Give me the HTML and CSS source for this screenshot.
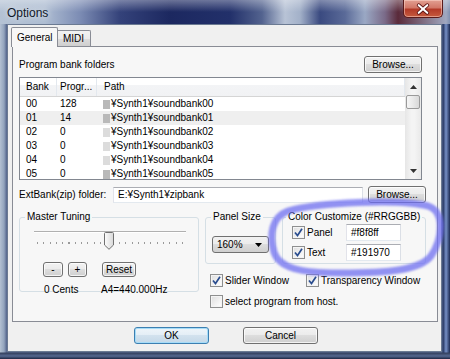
FILE: index.html
```html
<!DOCTYPE html>
<html lang="en">
<head>
    <meta charset="UTF-8">
    <meta name="viewport" content="width=device-width, initial-scale=1.0">
    <title>Options</title>
    <link rel="stylesheet" href="styles.css">
</head>
<body>
    <div class="window">
        <div class="titlebar">
            <span class="title">Options</span>
            <div class="close-btn">
                <svg viewBox="0 0 40 18" width="40" height="18">
                    <path d="M15.5 5 L24.5 13 M24.5 5 L15.5 13" stroke="#5a1010" stroke-width="4" stroke-linecap="round"/>
                    <path d="M15.5 5 L24.5 13 M24.5 5 L15.5 13" stroke="#ffffff" stroke-width="2.2" stroke-linecap="round"/>
                </svg>
            </div>
        </div>

        <div class="frame">
            <div class="client">
                <div class="tabs">
                    <div class="tab active">General</div>
                    <div class="tab">MIDI</div>
                </div>

                <div class="tab-panel">
                    <div class="bank-head">
                        <span>Program bank folders</span>
                        <button class="btn browse">Browse...</button>
                    </div>

                    <div class="listview">
                        <div class="list-body">
                            <div class="list-header">
                                <div class="col-bank">Bank</div>
                                <div class="col-prog">Progr...</div>
                                <div class="col-path">Path</div>
                            </div>
                            <div class="list-row">
                                <div class="col-bank">00</div>
                                <div class="col-prog">128</div>
                                <div class="col-path"><span class="path-icon"></span>¥Synth1¥soundbank00</div>
                            </div>
                            <div class="list-row hot">
                                <div class="col-bank">01</div>
                                <div class="col-prog">14</div>
                                <div class="col-path"><span class="path-icon"></span>¥Synth1¥soundbank01</div>
                            </div>
                            <div class="list-row">
                                <div class="col-bank">02</div>
                                <div class="col-prog">0</div>
                                <div class="col-path"><span class="path-icon light"></span>¥Synth1¥soundbank02</div>
                            </div>
                            <div class="list-row">
                                <div class="col-bank">03</div>
                                <div class="col-prog">0</div>
                                <div class="col-path"><span class="path-icon light"></span>¥Synth1¥soundbank03</div>
                            </div>
                            <div class="list-row">
                                <div class="col-bank">04</div>
                                <div class="col-prog">0</div>
                                <div class="col-path"><span class="path-icon light"></span>¥Synth1¥soundbank04</div>
                            </div>
                            <div class="list-row">
                                <div class="col-bank">05</div>
                                <div class="col-prog">0</div>
                                <div class="col-path"><span class="path-icon"></span>¥Synth1¥soundbank05</div>
                            </div>
                        </div>
                        <div class="scrollbar">
                            <div class="sb-arrow">
                                <svg viewBox="0 0 7 4" width="7" height="4"><path d="M0 4 L3.5 0 L7 4 Z" fill="#333"/></svg>
                            </div>
                            <div class="sb-thumb"></div>
                            <div class="sb-track"></div>
                            <div class="sb-arrow">
                                <svg viewBox="0 0 7 4" width="7" height="4"><path d="M0 0 L3.5 4 L7 0 Z" fill="#333"/></svg>
                            </div>
                        </div>
                    </div>

                    <div class="ext-row">
                        <span>ExtBank(zip) folder:</span>
                        <div class="field">E:¥Synth1¥zipbank</div>
                        <button class="btn browse">Browse...</button>
                    </div>

                    <div class="lower">
                        <fieldset class="group tuning">
                            <legend>Master Tuning</legend>
                            <div class="slider">
                                <div class="slider-track"></div>
                                <div class="slider-ticks"></div>
                                <div class="slider-thumb" style="left: 70px;">
                                    <svg viewBox="0 0 10 18" width="10" height="18">
                                        <defs>
                                            <linearGradient id="thumbFill" x1="0" y1="0" x2="1" y2="0">
                                                <stop offset="0" stop-color="#fdfdfd"/>
                                                <stop offset="1" stop-color="#d8d8d8"/>
                                            </linearGradient>
                                        </defs>
                                        <path d="M1.5 0.5 H8.5 Q9.5 0.5 9.5 1.5 V13 L5 17.3 L0.5 13 V1.5 Q0.5 0.5 1.5 0.5 Z" fill="url(#thumbFill)" stroke="#707070"/>
                                    </svg>
                                </div>
                            </div>
                            <div class="tune-buttons">
                                <button class="btn small minus">-</button>
                                <button class="btn small plus">+</button>
                                <button class="btn small reset">Reset</button>
                            </div>
                            <div class="tune-values">
                                <span>0 Cents</span>
                                <span>A4=440.000Hz</span>
                            </div>
                        </fieldset>

                        <div class="right-col">
                            <div class="group-row">
                                <fieldset class="group size">
                                    <legend>Panel Size</legend>
                                    <div class="combo">
                                        <span>160%</span>
                                        <svg viewBox="0 0 7 4" width="7" height="4"><path d="M0 0 L3.5 4 L7 0 Z" fill="#000"/></svg>
                                    </div>
                                </fieldset>
                                <fieldset class="group colors">
                                    <legend>Color Customize (#RRGGBB)</legend>
                                    <div class="color-row">
                                        <span class="check checked">
                                            <svg viewBox="0 0 11 11" width="11" height="11"><path d="M2 5.5 L4.5 8.5 L9 1.8" fill="none" stroke="#2a4d8f" stroke-width="1.7"/></svg>
                                        </span>
                                        <span class="color-label">Panel</span>
                                        <div class="field">#f8f8ff</div>
                                    </div>
                                    <div class="color-row">
                                        <span class="check checked">
                                            <svg viewBox="0 0 11 11" width="11" height="11"><path d="M2 5.5 L4.5 8.5 L9 1.8" fill="none" stroke="#2a4d8f" stroke-width="1.7"/></svg>
                                        </span>
                                        <span class="color-label">Text</span>
                                        <div class="field">#191970</div>
                                    </div>
                                </fieldset>
                            </div>

                            <div class="check-row first">
                                <label class="check-item slider-opt">
                                    <span class="check checked">
                                        <svg viewBox="0 0 11 11" width="11" height="11"><path d="M2 5.5 L4.5 8.5 L9 1.8" fill="none" stroke="#2a4d8f" stroke-width="1.7"/></svg>
                                    </span>
                                    Slider Window
                                </label>
                                <label class="check-item">
                                    <span class="check checked">
                                        <svg viewBox="0 0 11 11" width="11" height="11"><path d="M2 5.5 L4.5 8.5 L9 1.8" fill="none" stroke="#2a4d8f" stroke-width="1.7"/></svg>
                                    </span>
                                    Transparency Window
                                </label>
                            </div>
                            <div class="check-row">
                                <label class="check-item">
                                    <span class="check"></span>
                                    select program from host.
                                </label>
                            </div>
                        </div>
                    </div>
                </div>

                <div class="dialog-buttons">
                    <button class="btn wide default">OK</button>
                    <button class="btn wide">Cancel</button>
                </div>
            </div>
        </div>

        <!-- hand-drawn marker around the colour settings -->
        <svg class="annotation" viewBox="0 0 450 359" width="450" height="359">
            <defs>
                <filter id="soft" x="-10%" y="-10%" width="120%" height="120%">
                    <feGaussianBlur stdDeviation="1.2"/>
                </filter>
            </defs>
            <path d="M288 211 C 320 202, 400 199, 428 206 C 446 212, 442 240, 431 256 C 420 270, 390 273, 340 273 C 300 273, 279 268, 274 252 C 269 234, 272 217, 288 211 Z"
                  fill="none" stroke="#6f6ff0" stroke-width="7" stroke-opacity="0.75" filter="url(#soft)"/>
        </svg>
    </div>
</body>
</html>
```

FILE: styles.css
```css
* {
    box-sizing: border-box;
}

body {
    margin: 0;
    font-family: 'Liberation Sans', Arial, sans-serif;
    font-size: 10px;
    color: #000;
    background: #5d6f96;
}

.window {
    position: relative;
    width: 450px;
    height: 359px;
    display: flex;
    flex-direction: column;
    background:
        linear-gradient(180deg, transparent 0, transparent 352px, #34405e 353px, #56688f 356px, #1e2744 359px),
        linear-gradient(90deg, #b3c0d2 0, #93a4bd 4px, #52628a 7px, transparent 7px, transparent 442px, #24345f 443px, #7690c6 446px, #1c2a52 450px);
}

/* title bar */
.titlebar {
    height: 24px;
    display: flex;
    align-items: flex-start;
    justify-content: space-between;
    padding: 0 7px 0 7px;
    background:
        linear-gradient(180deg, rgba(255, 255, 255, 0.35) 0, rgba(255, 255, 255, 0) 12px),
        linear-gradient(90deg, #b4c2d4 0, #aebdd2 45px, #7c8cb4 80px, #34427a 120px, #1c2860 170px, #22306a 230px, #53638f 262px, #b8c3d6 285px, #a3b1c9 300px, #3a4a80 320px, #5a6a98 345px, #9aa8c4 365px, #7a6a88 385px, #5a2a3a 398px, #a0a8c0 446px, #8090b0 450px);
}

.title {
    font-size: 12px;
    line-height: 26px;
    color: #101828;
    text-shadow: 0 0 6px rgba(255, 255, 255, 0.9);
}

.close-btn {
    width: 40px;
    height: 18px;
    border: 1px solid #5a1a1a;
    border-top: none;
    border-radius: 0 0 5px 5px;
    background: linear-gradient(180deg, #e2a092 0, #d27868 45%, #b33a28 55%, #c65a3e 100%);
    box-shadow: inset 0 0 0 1px rgba(255, 220, 210, 0.5);
    display: flex;
    align-items: center;
    justify-content: center;
}

.close-btn svg {
    display: block;
}

.frame {
    flex: 1;
    padding: 0 8px 7px 7px;
    display: flex;
}

.client {
    flex: 1;
    background: #f0f0f0;
    border: 1px solid #6b7a92;
    display: flex;
    flex-direction: column;
}

/* tabs */
.tabs {
    display: flex;
    align-items: flex-end;
    height: 19px;
    margin: 2px 0 0 3px;
    position: relative;
    z-index: 1;
}

.tab {
    height: 16px;
    padding: 0 6px 0 5px;
    line-height: 15px;
    border: 1px solid #898c95;
    border-bottom: none;
    border-left: none;
    border-radius: 0 2px 0 0;
    background: linear-gradient(180deg, #f2f2f2 0, #ebebeb 50%, #dddddd 51%, #cfcfcf 100%);
}

.tab.active {
    height: 20px;
    width: 47px;
    margin-bottom: -1px;
    padding: 0 0 0 5px;
    line-height: 19px;
    border-left: 1px solid #898c95;
    border-radius: 2px 2px 0 0;
    background: #f7f7f7;
}

.tab-panel {
    margin-left: 4px;
    width: 426px;
    height: 276px;
    border: 1px solid #898c95;
    background: #f7f7f7;
    padding: 9px 15px 0 6px;
    display: flex;
    flex-direction: column;
}

/* buttons */
.btn {
    font: inherit;
    color: #000;
    height: 17px;
    padding: 0;
    border: 1px solid #707070;
    border-radius: 3px;
    background: linear-gradient(180deg, #f2f2f2 0, #ebebeb 49%, #dddddd 50%, #cfcfcf 100%);
    box-shadow: inset 0 0 0 1px rgba(255, 255, 255, 0.75);
}

.btn.browse {
    width: 58px;
}

.btn.small {
    height: 15px;
    line-height: 12px;
}

.btn.minus {
    width: 20px;
}

.btn.plus {
    width: 19px;
}

.btn.reset {
    width: 34px;
}

.btn.wide {
    width: 75px;
}

.btn.default {
    border-color: #3c7fb1;
    background: linear-gradient(180deg, #eef5fa 0, #e3eef6 49%, #d2e2ee 50%, #c4d8e8 100%);
    box-shadow: inset 0 0 0 1px #a6dcf8;
}

/* bank list */
.bank-head {
    height: 17px;
    display: flex;
    align-items: center;
    justify-content: space-between;
}

.listview {
    margin-top: 4px;
    height: 103px;
    border: 1px solid #828790;
    background: #fff;
    display: flex;
}

.list-body {
    flex: 1;
    overflow: hidden;
}

.list-header,
.list-row {
    display: grid;
    grid-template-columns: 37px 40px 1fr;
}

.list-header {
    height: 19px;
    line-height: 18px;
    border-bottom: 1px solid #d5d5d5;
    background: linear-gradient(180deg, #ffffff 0, #ffffff 40%, #f3f4f6 41%, #f1f2f4 100%);
}

.list-header > div {
    border-right: 1px solid #e3e8ee;
}

.list-row {
    height: 14px;
    line-height: 14px;
}

.list-row.hot {
    background: #efefef;
}

.col-bank {
    padding-left: 6px;
}

.col-prog {
    padding-left: 3px;
}

.col-path {
    padding-left: 6px;
    display: flex;
    align-items: center;
    white-space: nowrap;
}

.list-header .col-path {
    padding-left: 7px;
}

.path-icon {
    width: 7px;
    height: 9px;
    margin-right: 1px;
    background: #b9b9b9;
}

.path-icon.light {
    background: #dcdcdc;
}

.scrollbar {
    width: 16px;
    display: flex;
    flex-direction: column;
    background: linear-gradient(90deg, #e6e6e6 0, #f4f4f4 40%, #f4f4f4 60%, #e9e9e9 100%);
}

.sb-arrow {
    height: 17px;
    display: flex;
    align-items: center;
    justify-content: center;
}

.sb-thumb {
    height: 14px;
    margin: 0 1px;
    border: 1px solid #9a9a9a;
    border-radius: 2px;
    background: linear-gradient(90deg, #f6f6f6 0, #e9e9e9 50%, #d8d8d8 100%);
}

.sb-track {
    flex: 1;
}

/* ext bank row */
.ext-row {
    margin-top: 6px;
    height: 17px;
    display: grid;
    grid-template-columns: 89px 250px 58px;
    column-gap: 5px;
    align-items: center;
    white-space: nowrap;
}

.field {
    height: 17px;
    padding: 0 4px;
    display: flex;
    align-items: center;
    background: #fff;
    border: 1px solid;
    border-color: #abadb3 #dbdfe6 #e3e9ef #e2e3ea;
    white-space: nowrap;
}

.ext-row .field {
    height: 16px;
}

/* lower section */
.lower {
    margin-top: 8px;
    display: grid;
    grid-template-columns: 180px 221px;
    column-gap: 6px;
    align-items: start;
}

.group {
    margin: 0;
    padding: 0;
    min-width: 0;
    border: 1px solid #d5dfe5;
    border-radius: 3px;
}

.group legend {
    padding: 0 2px;
    line-height: 12px;
}

.tuning {
    height: 81px;
}

.tuning legend {
    margin-left: 5px;
}

.slider {
    position: relative;
    height: 21px;
    margin: 0 12px 0 14px;
}

.slider-track {
    margin-top: 8px;
    height: 2px;
    border-top: 1px solid #b0b0b0;
    border-bottom: 1px solid #ffffff;
    background: #e4e4e4;
}

.slider-ticks {
    margin: 9px 3px 0;
    height: 2px;
    background: repeating-linear-gradient(90deg, #9a9a9a 0, #9a9a9a 1px, transparent 1px, transparent 6.3px);
}

.slider-thumb {
    position: absolute;
    top: 1px;
}

.slider-thumb svg {
    display: block;
}

.tune-buttons {
    margin-top: 10px;
    padding-left: 23px;
    display: flex;
}

.tune-buttons .plus {
    margin-left: 5px;
}

.tune-buttons .reset {
    margin-left: 15px;
}

.tune-values {
    margin-top: 7px;
    padding-left: 24px;
    display: grid;
    grid-template-columns: 57px auto;
    line-height: 12px;
}

.group-row {
    display: grid;
    grid-template-columns: 71px 144px;
    column-gap: 6px;
}

.group-row .group {
    height: 53px;
}

.size legend {
    margin-left: 5px;
}

.combo {
    margin: 13px 0 0 6px;
    width: 57px;
    height: 17px;
    padding: 0 6px 0 4px;
    display: flex;
    align-items: center;
    justify-content: space-between;
    border: 1px solid #707070;
    border-radius: 3px;
    background: linear-gradient(180deg, #f2f2f2 0, #ebebeb 49%, #dddddd 50%, #cfcfcf 100%);
}

.colors legend {
    margin-left: 3px;
    white-space: nowrap;
}

.color-row {
    display: flex;
    align-items: center;
    padding-left: 9px;
    margin-top: 1px;
}

.color-row + .color-row {
    margin-top: 3px;
}

.color-row .field {
    width: 55px;
}

.color-label {
    width: 41px;
    padding-left: 2px;
}

/* checkboxes */
.check {
    width: 13px;
    height: 13px;
    flex: none;
    border: 1px solid #8e8f8f;
    background: linear-gradient(135deg, #dedede 0, #f6f6f6 70%, #ffffff 100%);
    box-shadow: inset 0 0 0 1px #f4f4f4;
    display: flex;
    align-items: center;
    justify-content: center;
}

.check svg {
    display: block;
}

.check-row {
    margin-top: 8px;
    padding-left: 5px;
    display: flex;
    line-height: 13px;
}

.check-row.first {
    margin-top: 10px;
}

.check-item {
    display: flex;
    align-items: center;
    gap: 2px;
}

.check-item.slider-opt {
    width: 96px;
}

/* bottom buttons */
.dialog-buttons {
    margin-top: 5px;
    padding-left: 3px;
    display: flex;
    justify-content: center;
    gap: 34px;
}

.annotation {
    position: absolute;
    left: 0;
    top: 0;
    pointer-events: none;
}
```
